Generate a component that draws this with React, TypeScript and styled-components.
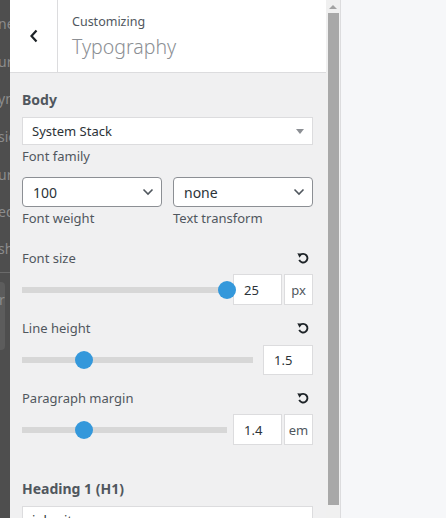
import React from "react";
import styled, { createGlobalStyle } from "styled-components";

const GlobalStyle = createGlobalStyle`
  html, body {
    margin: 0;
    padding: 0;
    width: 446px;
    height: 518px;
    overflow: hidden;
    font-family: "Noto Sans", "Open Sans", sans-serif;
  }
  * { box-sizing: border-box; }
`;

const stripWords = [
  { text: "ne", top: 14 },
  { text: "ur", top: 52 },
  { text: "yn", top: 89 },
  { text: "sic", top: 127 },
  { text: "ur", top: 165 },
  { text: "ed", top: 202 },
  { text: "sh", top: 239 },
];

function ResetIcon() {
  return (
    <svg width="12" height="12" viewBox="0 0 14 14" fill="none">
      <path
        d="M3.2 4.2 A5 5 0 1 1 2.6 9.2"
        stroke="#1d2327"
        strokeWidth="2.2"
      />
      <path d="M0.4 1.4 L5.8 2 L3 6.6 Z" fill="#1d2327" />
    </svg>
  );
}

function Chevron() {
  return (
    <svg width="12" height="8" viewBox="0 0 12 8" fill="none">
      <path d="M1.5 1.5 L6 6 L10.5 1.5" stroke="#50575e" strokeWidth="1.6" />
    </svg>
  );
}

function Slider({ pct, gap = 6 }: { pct: number; gap?: number }) {
  return (
    <SliderTrack $gap={gap}>
      <SliderThumb style={{ left: `${pct}%` }} />
    </SliderTrack>
  );
}

export default function App() {
  return (
    <>
      <GlobalStyle />
      <Page>
        <Strip>
          {stripWords.map((w, i) => (
            <StripWord key={i} style={{ top: w.top }}>
              {w.text}
            </StripWord>
          ))}
          <StripLine />
          <StripCard>
            <StripWord style={{ top: 8, left: -3 }}>er</StripWord>
          </StripCard>
        </Strip>

        <Panel>
          <Header>
            <BackButton>
              <svg width="10" height="14" viewBox="0 0 10 14" fill="none">
                <path d="M7.5 1.5 L2.5 7 L7.5 12.5" stroke="#1d2327" strokeWidth="2.2" />
              </svg>
            </BackButton>
            <HeaderTitles>
              <Eyebrow>Customizing</Eyebrow>
              <Title>Typography</Title>
            </HeaderTitles>
          </Header>

          <Body>
            <SectionTitle>Body</SectionTitle>
            <FlatSelect>
              <span>System Stack</span>
              <Caret />
            </FlatSelect>
            <Label>Font family</Label>

            <TwoCol>
              <Field>
                <RoundSelect>
                  <span>100</span>
                  <Chevron />
                </RoundSelect>
                <Label>Font weight</Label>
              </Field>
              <Field>
                <RoundSelect>
                  <span>none</span>
                  <Chevron />
                </RoundSelect>
                <Label>Text transform</Label>
              </Field>
            </TwoCol>

            <ControlHead $top={17}>
              <Label>Font size</Label>
              <ResetIcon />
            </ControlHead>
            <ControlRow>
              <Slider pct={100} />
              <ValueBox $w={49}>25</ValueBox>
              <UnitBox>px</UnitBox>
            </ControlRow>

            <ControlHead $top={11}>
              <Label>Line height</Label>
              <ResetIcon />
            </ControlHead>
            <ControlRow>
              <Slider pct={26.7} gap={10} />
              <ValueBox $w={50} $h={30}>1.5</ValueBox>
            </ControlRow>

            <ControlHead $top={11}>
              <Label>Paragraph margin</Label>
              <ResetIcon />
            </ControlHead>
            <ControlRow>
              <Slider pct={30.2} />
              <ValueBox $w={49}>1.4</ValueBox>
              <UnitBox>em</UnitBox>
            </ControlRow>

            <SectionTitle $top={34}>Heading 1 (H1)</SectionTitle>
            <FlatSelect>
              <span>inherit</span>
              <Caret />
            </FlatSelect>
          </Body>
        </Panel>

        <Scrollbar>
          <ScrollArrow />
          <ScrollThumb />
        </Scrollbar>

        <Preview />
      </Page>
    </>
  );
}

const Page = styled.div`
  display: flex;
  width: 446px;
  height: 518px;
  overflow: hidden;
`;

const Strip = styled.div`
  position: relative;
  width: 10px;
  flex-shrink: 0;
  background-color: #4e4e4e;
  overflow: hidden;
`;

const StripWord = styled.span`
  position: absolute;
  left: -2px;
  font-size: 14px;
  color: #8c8c8c;
  white-space: nowrap;
`;

const StripLine = styled.div`
  position: absolute;
  top: 272px;
  left: 0;
  width: 10px;
  height: 1px;
  background-color: #6a6a6a;
`;

const StripCard = styled.div`
  position: absolute;
  top: 282px;
  left: -6px;
  width: 11px;
  height: 68px;
  border-radius: 4px;
  background-color: #5c5c5c;
  overflow: hidden;
`;

const Panel = styled.div`
  width: 316px;
  flex-shrink: 0;
  background-color: #f0f0f1;
  display: flex;
  flex-direction: column;
  overflow: hidden;
`;

const Header = styled.div`
  display: flex;
  height: 73px;
  flex-shrink: 0;
  background-color: #fff;
  border-bottom: 1px solid #dcdcde;
`;

const BackButton = styled.div`
  width: 48px;
  display: flex;
  align-items: center;
  justify-content: center;
  border-right: 1px solid #dcdcde;
  padding-left: 1px;
`;

const HeaderTitles = styled.div`
  display: flex;
  flex-direction: column;
  padding: 13px 0 0 14px;
`;

const Eyebrow = styled.span`
  font-size: 12.5px;
  line-height: 18px;
  color: #50575e;
`;

const Title = styled.span`
  font-size: 19.5px;
  line-height: 31px;
  font-weight: 300;
  color: #8c8f94;
`;

const Body = styled.div`
  display: flex;
  flex-direction: column;
  padding: 17px 13px 0 12px;
`;

const SectionTitle = styled.div<{ $top?: number }>`
  font-size: 14px;
  font-weight: 700;
  line-height: 20px;
  color: #50575e;
  margin-top: ${(p) => p.$top ?? 0}px;
  margin-bottom: 7px;
`;

const FlatSelect = styled.div`
  display: flex;
  align-items: center;
  justify-content: space-between;
  height: 28px;
  padding: 0 8px 0 9px;
  background-color: #fff;
  border: 1px solid #dcdcde;
  font-size: 13px;
  color: #2c3338;
`;

const Caret = styled.span`
  width: 0;
  height: 0;
  border-left: 4px solid transparent;
  border-right: 4px solid transparent;
  border-top: 5px solid #8c8f94;
`;

const Label = styled.span`
  display: block;
  font-size: 13px;
  line-height: 22px;
  color: #50575e;
`;

const TwoCol = styled.div`
  display: grid;
  grid-template-columns: 1fr 1fr;
  column-gap: 11px;
  margin-top: 10px;
`;

const Field = styled.div`
  display: flex;
  flex-direction: column;
`;

const RoundSelect = styled.div`
  display: flex;
  align-items: center;
  justify-content: space-between;
  height: 30px;
  padding: 0 7px 0 10px;
  background-color: #fff;
  border: 1px solid #8c8f94;
  border-radius: 4px;
  font-size: 14px;
  color: #2c3338;
`;

const ControlHead = styled.div<{ $top: number }>`
  display: flex;
  align-items: center;
  justify-content: space-between;
  margin-top: ${(p) => p.$top}px;
  padding-right: 4px;
  height: 24px;
`;

const ControlRow = styled.div`
  display: flex;
  align-items: center;
  height: 31px;
  margin-top: 4px;
  gap: 2px;
`;

const SliderTrack = styled.div<{ $gap: number }>`
  position: relative;
  flex: 1;
  height: 6px;
  margin-right: ${(p) => p.$gap - 2}px;
  background-color: #d7d7d7;
`;

const SliderThumb = styled.div`
  position: absolute;
  top: 50%;
  width: 18px;
  height: 18px;
  margin: -9px 0 0 -9px;
  border-radius: 50%;
  background-color: #3498db;
`;

const ValueBox = styled.div<{ $w: number; $h?: number }>`
  width: ${(p) => p.$w}px;
  height: ${(p) => p.$h ?? 31}px;
  display: flex;
  align-items: center;
  padding-left: 10px;
  background-color: #fff;
  border: 1px solid #dcdcde;
  font-size: 13px;
  color: #2c3338;
`;

const UnitBox = styled.div`
  width: 29px;
  height: 31px;
  display: flex;
  align-items: center;
  justify-content: center;
  background-color: #fff;
  border: 1px solid #dcdcde;
  font-size: 13px;
  color: #50575e;
`;

const Scrollbar = styled.div`
  width: 15px;
  flex-shrink: 0;
  display: flex;
  flex-direction: column;
  align-items: center;
  padding-top: 5px;
  background-color: #f0f0f0;
  border-right: 1px solid #dcdcde;
`;

const ScrollArrow = styled.div`
  width: 0;
  height: 0;
  border-left: 4px solid transparent;
  border-right: 4px solid transparent;
  border-bottom: 4px solid #a3a3a3;
`;

const ScrollThumb = styled.div`
  width: 11px;
  height: 492px;
  margin-top: 4px;
  background-color: #a8a8a8;
`;

const Preview = styled.div`
  flex: 1;
  background-color: #f6f7f9;
`;
